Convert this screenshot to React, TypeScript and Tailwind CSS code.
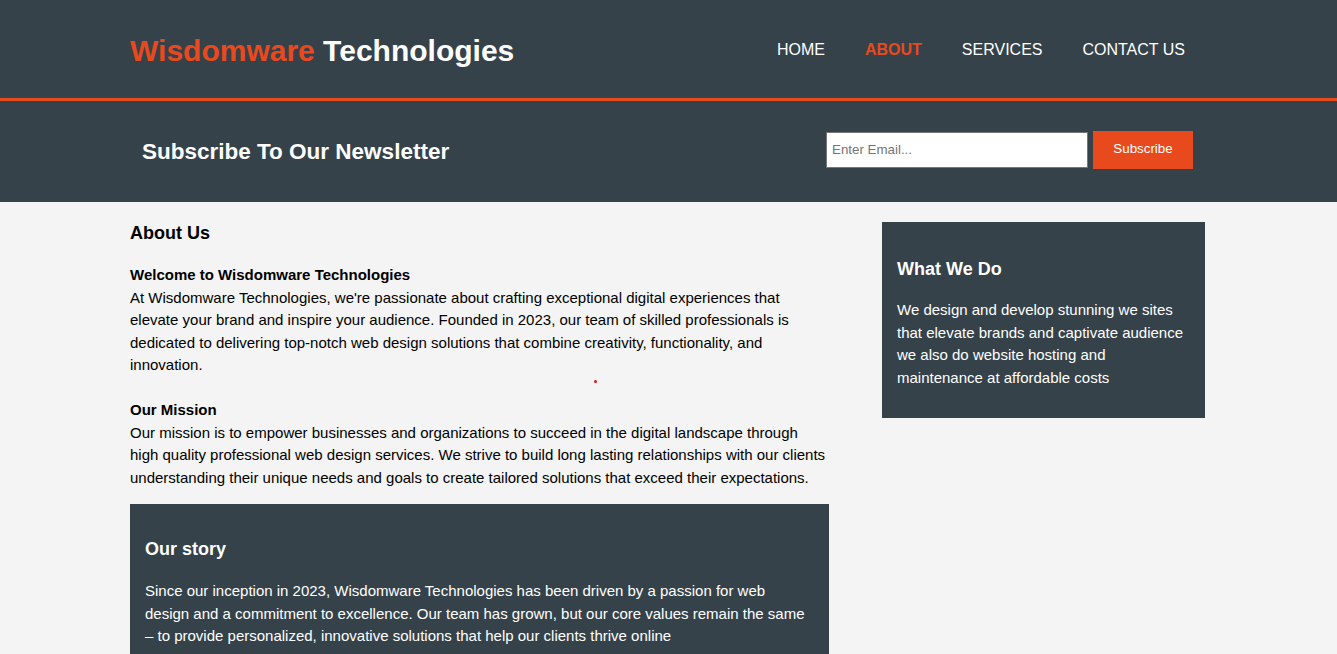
export default function App() {
  const navLinks = [
    { label: 'HOME', current: false },
    { label: 'ABOUT', current: true },
    { label: 'SERVICES', current: false },
    { label: 'CONTACT US', current: false },
  ];

  return (
    <div className="relative min-h-[654px] bg-[#f4f4f4] font-['Liberation_Sans',Arial,sans-serif] text-[15px] leading-[22.5px] text-black">
      {/* Header */}
      <header className="bg-[#35424a] text-white border-b-[3px] border-[#e8491d]">
        <div className="w-[1077px] mx-auto pr-[2px] h-[98px] flex items-center justify-between">
          <h1 className="mt-[4px] text-[30px] leading-[34px] font-bold">
            <span className="text-[#e8491d]">Wisdomware</span> Technologies
          </h1>
          <nav>
            <ul className="flex text-[16px] leading-[20px] mt-[2px]">
              {navLinks.map((link) => (
                <li key={link.label} className="px-5">
                  <a
                    href="#"
                    className={link.current ? 'text-[#e8491d] font-bold' : 'text-white'}
                  >
                    {link.label}
                  </a>
                </li>
              ))}
            </ul>
          </nav>
        </div>
      </header>

      {/* Newsletter */}
      <section className="bg-[#35424a] text-white">
        <div className="w-[1077px] mx-auto h-[101px] flex items-center justify-between pl-3 pr-[14px]">
          <h2 className="text-[22.5px] leading-[30px] font-bold">Subscribe To Our Newsletter</h2>
          <form className="flex items-center gap-[5px] -mt-[4px]" onSubmit={(e) => e.preventDefault()}>
            <input
              type="email"
              placeholder="Enter Email..."
              className="w-[262px] h-[36px] bg-white border border-[#767676] px-[5px] text-[13.33px] text-black placeholder:text-[#757575] outline-none"
            />
            <button
              type="submit"
              className="w-[100px] h-[38px] bg-[#e8491d] text-white text-[13.33px]"
            >
              Subscribe
            </button>
          </form>
        </div>
      </section>

      {/* Main */}
      <div className="w-[1077px] mx-auto pr-[2px] flex items-start">
        <article className="w-[699px]">
          <h1 className="mt-[18px] text-[18px] leading-[27px] font-bold">About Us</h1>
          <p className="mt-[17px]">
            <strong>Welcome to Wisdomware Technologies</strong>
            <br />
            At Wisdomware Technologies, we're passionate about crafting exceptional digital
            experiences that elevate your brand and inspire your audience. Founded in 2023, our
            team of skilled professionals is dedicated to delivering top-notch web design
            solutions that combine creativity, functionality, and innovation.
          </p>
          <p className="mt-[22.5px]">
            <strong>Our Mission</strong>
            <br />
            Our mission is to empower businesses and organizations to succeed in the digital
            landscape through high quality professional web design services. We strive to build
            long lasting relationships with our clients understanding their unique needs and goals
            to create tailored solutions that exceed their expectations.
          </p>
          <div className="mt-[15px] bg-[#35424a] text-white pt-[15px] pb-[15px] pl-[15px] pr-[22px]">
            <h3 className="mt-[17px] text-[18px] leading-[27px] font-bold">Our story</h3>
            <p className="mt-[17px] mb-[15px]">
              Since our inception in 2023, Wisdomware Technologies has been driven by a passion
              for web design and a commitment to excellence. Our team has grown, but our core
              values remain the same – to provide personalized, innovative solutions that help our
              clients thrive online
            </p>
          </div>
        </article>

        <aside className="ml-auto mt-5 w-[323px] bg-[#35424a] text-white p-[15px]">
          <h3 className="mt-[19px] text-[18px] leading-[27px] font-bold">What We Do</h3>
          <p className="mt-[16px] mb-[14px]">
            We design and develop stunning we sites that elevate brands and captivate audience we
            also do website hosting and maintenance at affordable costs
          </p>
        </aside>
      </div>

      {/* stray red dot */}
      <span className="absolute left-[594px] top-[380px] w-[3px] h-[3px] rounded-full bg-[#e81010]" />
    </div>
  );
}
